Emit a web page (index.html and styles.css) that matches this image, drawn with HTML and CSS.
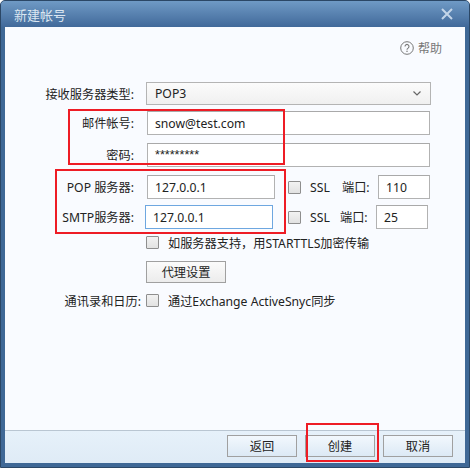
FILE: index.html
```html
<!DOCTYPE html>
<html lang="zh">
<head>
<meta charset="utf-8">
<title>新建帐号</title>
<link rel="stylesheet" href="styles.css">
</head>
<body>
<div class="window">
  <header class="titlebar">
    <span class="title">新建帐号</span>
    <svg class="close" width="12" height="12" viewBox="0 0 12 12"><path d="M1 1l10 10M11 1L1 11" stroke="#c3d5e8" stroke-width="2" fill="none"/></svg>
  </header>
  <main class="content">
    <div class="help">
      <svg width="14" height="14" viewBox="0 0 14 14"><circle cx="7" cy="7" r="6.3" fill="none" stroke="#777" stroke-width="1"/><path d="M5 5.4a2 2 0 1 1 3.1 1.7c-.8.5-1.1.9-1.1 1.7" fill="none" stroke="#777" stroke-width="1.1"/><rect x="6.4" y="9.7" width="1.2" height="1.3" fill="#777"/></svg>
      <span>帮助</span>
    </div>
    <div class="row row-type">
      <label class="lbl">接收服务器类型:</label>
      <div class="select"><span>POP3</span>
        <svg width="8" height="5" viewBox="0 0 8 5"><path d="M.5.5L4 4 7.5.5" fill="none" stroke="#666" stroke-width="1.2"/></svg>
      </div>
    </div>
    <div class="row row-mail">
      <label class="lbl">邮件帐号:</label>
      <div class="input wide">snow@test.com</div>
    </div>
    <div class="row row-pass">
      <label class="lbl">密码:</label>
      <div class="input wide pass">*********</div>
    </div>
    <div class="row row-pop">
      <label class="lbl">POP 服务器:</label>
      <div class="input host">127.0.0.1</div>
      <span class="check ssl-check"></span>
      <span class="ssl">SSL</span>
      <span class="port-lbl">端口:</span>
      <div class="input port">110</div>
    </div>
    <div class="row row-smtp">
      <label class="lbl">SMTP服务器:</label>
      <div class="input host focus">127.0.0.1</div>
      <span class="check ssl-check"></span>
      <span class="ssl">SSL</span>
      <span class="port-lbl">端口:</span>
      <div class="input port">25</div>
    </div>
    <div class="row row-tls">
      <span class="check"></span>
      <span class="opt">如服务器支持&#xFF0C;用STARTTLS加密传输</span>
    </div>
    <div class="row row-proxy">
      <button class="btn proxy" type="button">代理设置</button>
    </div>
    <div class="row row-sync">
      <label class="lbl lbl-sync">通讯录和日历:</label>
      <span class="check"></span>
      <span class="opt">通过Exchange ActiveSnyc同步</span>
    </div>
    <div class="mark mark-a"></div>
    <div class="mark mark-b"></div>
  </main>
  <footer class="footer">
    <button class="btn action" type="button">返回</button>
    <button class="btn action" type="button">创建</button>
    <button class="btn action" type="button">取消</button>
    <div class="mark mark-c"></div>
  </footer>
</div>
</body>
</html>
```

FILE: styles.css
```css
* { box-sizing: border-box; }
html, body { margin: 0; padding: 0; background: #fff; }
body {
  width: 470px;
  height: 468px;
  overflow: hidden;
  font-family: "Noto Sans", "Noto Sans CJK SC", sans-serif;
  font-size: 12.2px;
  color: #222;
}
.window {
  position: relative;
  width: 470px;
  height: 468px;
  display: flex;
  flex-direction: column;
  background: #3f6896;
  border: 1px solid #2b4766;
  border-radius: 5px 5px 0 0;
  padding: 0 4px 4px;
}
.titlebar {
  height: 26px;
  flex: none;
  margin: 0 -4px;
  padding: 0 16px 0 13px;
  display: flex;
  align-items: center;
  justify-content: space-between;
  background: linear-gradient(#6f9ac5, #41699a);
  border-radius: 4px 4px 0 0;
}
.title { color: #dbe6f1; font-size: 13px; }
.content {
  position: relative;
  flex: 1;
  display: flex;
  flex-direction: column;
  padding-top: 14px;
  background: #f9fbff;
}
.help {
  height: 14px;
  padding-right: 23px;
  display: flex;
  align-items: center;
  justify-content: flex-end;
  gap: 4px;
  color: #777;
  font-size: 12px;
}
.row {
  flex: none;
  display: flex;
  align-items: center;
}
.row-type { margin-top: 27px; }
.row-mail { margin-top: 6px; }
.row-pass { margin-top: 8px; }
.row-pop { margin-top: 8px; }
.row-smtp { margin-top: 6px; }
.row-tls { height: 13px; margin-top: 7px; padding-left: 141px; }
.row-proxy { margin-top: 12px; padding-left: 141px; }
.row-sync { height: 13px; margin-top: 11px; }
.lbl {
  width: 129px;
  text-align: right;
  flex: none;
  white-space: nowrap;
}
.select {
  margin-left: 12px;
  width: 285px;
  height: 23px;
  padding: 0 9px 0 8px;
  display: flex;
  align-items: center;
  justify-content: space-between;
  border: 1px solid #b4b4b4;
  background: linear-gradient(#fbfbfb, #f0f0f0);
}
.input {
  height: 24px;
  padding: 0 7px;
  display: flex;
  align-items: center;
  background: #fff;
  border: 1px solid #b2b2b2;
  border-top-color: #a9a9a9;
  flex: none;
}
.wide { margin-left: 13px; width: 283px; }
.pass { font-family: "Liberation Sans", sans-serif; font-size: 12.6px; }
.host { margin-left: 13px; width: 128px; }
.focus { margin-left: 11px; border-color: #6ea7e0; }
.port { width: 52px; }
.check {
  flex: none;
  width: 13px;
  height: 13px;
  border: 1px solid #8e8e8e;
  border-radius: 1px;
  background: linear-gradient(#f2f2f2, #e2e2e2);
}
.ssl-check { margin-left: 13px; }
.ssl { margin-left: 9px; width: 32px; flex: none; }
.port-lbl { width: 36px; flex: none; }
.row-smtp .ssl-check { margin-left: 15px; }
.row-smtp .ssl { width: 30px; }
.opt { margin-left: 9px; white-space: nowrap; }
.lbl-sync { width: 136px; }
.lbl-sync + .check { margin-left: 5px; }
.btn {
  font: inherit;
  color: #222;
  padding: 0;
  border: 1px solid #a0a0a0;
  cursor: default;
}
.proxy {
  width: 80px;
  height: 22px;
  background: linear-gradient(#fbfbfb, #ececec);
}
.footer {
  flex: none;
  height: 33px;
  padding: 4px 12px 0 0;
  position: relative;
  display: flex;
  justify-content: flex-end;
  gap: 8px;
  background: linear-gradient(#e6f1fa, #dfebf6);
  border-top: 1px solid #b9c6d2;
}
.action {
  width: 70px;
  height: 22px;
  background: linear-gradient(#f2f8fd, #dce9f5);
}
.mark { position: absolute; border: 2px solid #ee1c25; pointer-events: none; }
.mark-a { left: 63px; top: 82px; width: 217px; height: 56px; }
.mark-b { left: 50px; top: 142px; width: 231px; height: 65px; }
.mark-c { left: 301px; top: -8px; width: 73px; height: 39px; }
```
